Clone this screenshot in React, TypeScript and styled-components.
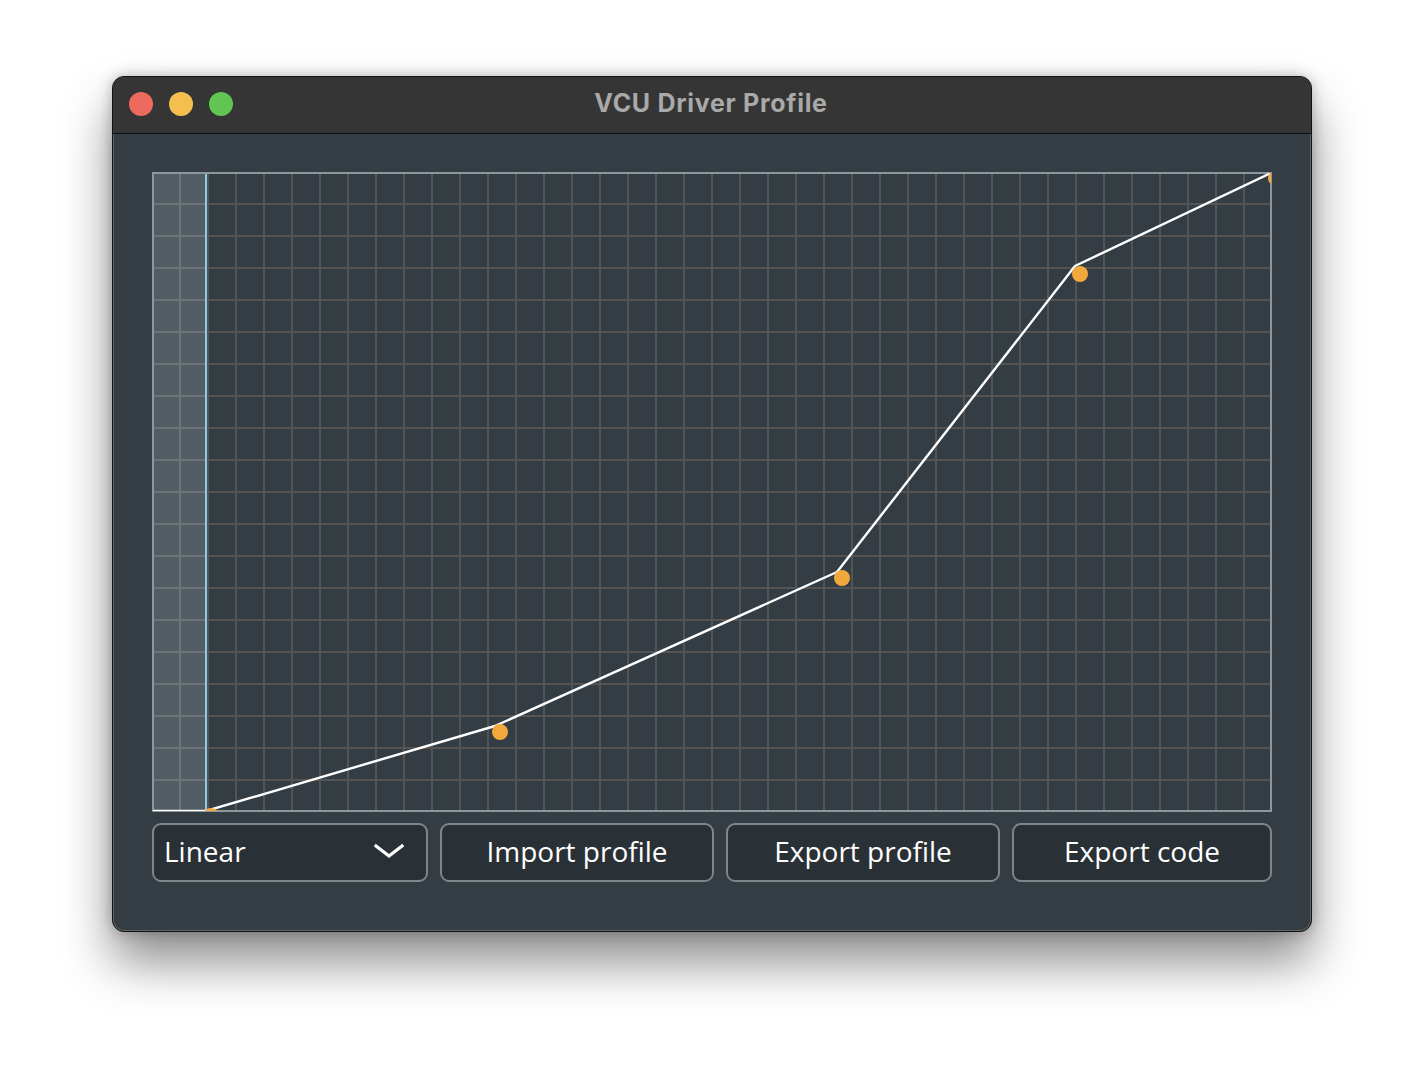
import React from "react";
import styled, { createGlobalStyle } from "styled-components";

const Global = createGlobalStyle`
  html, body { margin: 0; padding: 0; background: #ffffff; }
  body { width: 1424px; height: 1080px; overflow: hidden; }
`;

const Page = styled.div`
  width: 1424px;
  height: 1080px;
  padding: 76px 0 0 112px;
  box-sizing: border-box;
  background: #ffffff;
`;

const Window = styled.div`
  width: 1200px;
  height: 856px;
  box-sizing: border-box;
  border-radius: 12px;
  overflow: hidden;
  border: 1px solid #141414;
  box-shadow: inset 0 0 0 1px #5f6366, 0 30px 50px rgba(0, 0, 0, 0.45),
    0 0 14px rgba(0, 0, 0, 0.25);
  background: #343d44;
  display: flex;
  flex-direction: column;
`;

const TitleBar = styled.div`
  position: relative;
  height: 56px;
  flex: none;
  background: #353535;
  border-bottom: 1px solid #0e0e0e;
  display: flex;
  align-items: center;
  justify-content: center;
`;

const Lights = styled.div`
  position: absolute;
  left: 16px;
  top: 15px;
  display: flex;
  gap: 16px;
`;

const Light = styled.span<{ $c: string }>`
  width: 24px;
  height: 24px;
  border-radius: 50%;
  background: ${(p) => p.$c};
`;

const Title = styled.div`
  font-family: Inter, "Liberation Sans", sans-serif;
  font-weight: 700;
  font-size: 25px;
  color: #a9a9a9;
  letter-spacing: 0.7px;
  margin-left: -2px;
  margin-top: -4px;
`;

const Body = styled.div`
  flex: 1;
  padding: 38px 39px 0 39px;
  display: flex;
  flex-direction: column;
  gap: 11px;
`;

const Plot = styled.div`
  width: 1120px;
  height: 640px;
  line-height: 0;
`;

const Controls = styled.div`
  display: grid;
  grid-template-columns: 276px 274px 274px 1fr;
  gap: 12px;
  width: 1120px;
`;

const Btn = styled.button`
  height: 59px;
  box-sizing: border-box;
  border: 2px solid #7f8689;
  border-radius: 9px;
  background: #2a3136;
  color: #ffffff;
  font-family: "Open Sans", "Noto Sans", sans-serif;
  font-size: 28px;
  font-weight: 500;
  display: flex;
  align-items: center;
  justify-content: center;
  padding: 0 10px;
  padding-bottom: 4px;
`;

const Select = styled(Btn)`
  justify-content: space-between;
  padding-right: 22px;
`;

const W = 1120;
const H = 640;
const DEAD = 54;
const pts: [number, number][] = [
  [0, 639],
  [DEAD, 639],
  [343, 554],
  [685, 400],
  [923, 94],
  [1119, 1],
];
const dots: [number, number][] = [
  [59, 644],
  [348, 560],
  [690, 406],
  [928, 102],
  [1124, 6],
];

function Chart() {
  const vLines = [];
  for (let x = 28; x < W; x += 28) vLines.push(x);
  const hLines = [];
  for (let y = 32; y < H; y += 32) hLines.push(y);
  return (
    <svg width={W} height={H} viewBox={`0 0 ${W} ${H}`}>
      <defs>
        <clipPath id="plotclip">
          <rect x="1" y="1" width={W - 2} height={H - 2} />
        </clipPath>
      </defs>
      <rect x="0" y="0" width={W} height={H} fill="#343d44" />
      <rect x="0" y="0" width={DEAD} height={H} fill="#525c63" />
      <g stroke="#545454" strokeWidth="2" shapeRendering="crispEdges">
        {vLines.map((x) => (
          <line key={"v" + x} x1={x} y1={0} x2={x} y2={H} />
        ))}
        {hLines.map((y) => (
          <line key={"h" + y} x1={0} y1={y} x2={W} y2={y} />
        ))}
      </g>
      <g stroke="#6e7477" strokeWidth="2" shapeRendering="crispEdges">
        {vLines
          .filter((x) => x < DEAD)
          .map((x) => (
            <line key={"dv" + x} x1={x} y1={0} x2={x} y2={H} />
          ))}
        {hLines.map((y) => (
          <line key={"dh" + y} x1={0} y1={y} x2={DEAD} y2={y} />
        ))}
      </g>
      <line x1={DEAD} y1={0} x2={DEAD} y2={H} stroke="#8fcbe8" strokeWidth="2" shapeRendering="crispEdges" />
      <rect x="1" y="1" width={W - 2} height={H - 2} fill="none" stroke="#8e989c" strokeWidth="2" />
      <g clipPath="url(#plotclip)">
        <polyline
          points={pts.map((p) => p.join(",")).join(" ")}
          fill="none"
          stroke="#ffffff"
          strokeWidth="2.4"
          strokeLinejoin="round"
        />
        {dots.map(([x, y], i) => (
          <circle key={i} cx={x} cy={y} r="8" fill="#f2a93b" />
        ))}
      </g>
    </svg>
  );
}

const Chevron = () => (
  <svg width="30" height="16" viewBox="0 0 30 16">
    <polyline points="2,3 15,13 28,3" fill="none" stroke="#ffffff" strokeWidth="3.2" strokeLinecap="square" />
  </svg>
);

export default function App() {
  return (
    <>
      <Global />
      <Page>
        <Window>
          <TitleBar>
            <Lights>
              <Light $c="#ed6a5e" />
              <Light $c="#f5bf4f" />
              <Light $c="#61c554" />
            </Lights>
            <Title>VCU Driver Profile</Title>
          </TitleBar>
          <Body>
            <Plot>
              <Chart />
            </Plot>
            <Controls>
              <Select>
                <span>Linear</span>
                <Chevron />
              </Select>
              <Btn>Import profile</Btn>
              <Btn>Export profile</Btn>
              <Btn>Export code</Btn>
            </Controls>
          </Body>
        </Window>
      </Page>
    </>
  );
}
